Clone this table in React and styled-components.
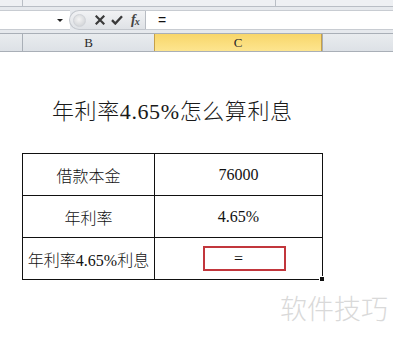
import React from "react";
import styled, { createGlobalStyle } from "styled-components";

const Global = createGlobalStyle`
  html, body {
    margin: 0;
    padding: 0;
    background: #ffffff;
  }
  body {
    font-family: "Liberation Serif", "Noto Sans CJK SC", serif;
  }
`;

const Page = styled.div`
  position: relative;
  width: 393px;
  height: 341px;
  overflow: hidden;
  background: #ffffff;
  display: flex;
  flex-direction: column;
`;

const TopStrip = styled.div`
  height: 6px;
  display: grid;
  grid-template-columns: 22px 253px 1fr;
  background: #eef0f3;
  border-bottom: 1px solid #b9bec5;
  div + div {
    border-left: 1px solid #b9bec5;
  }
`;

const Band = styled.div`
  height: ${(p) => p.h}px;
  background: #e6e9ed;
`;

const FormulaBar = styled.div`
  height: 20px;
  display: flex;
  align-items: stretch;
  background: #e6e9ed;
`;

const NameBox = styled.div`
  width: 70px;
  background: #ffffff;
  border-top: 1px solid #c8ccd2;
  border-bottom: 1px solid #c8ccd2;
  display: flex;
  align-items: center;
  justify-content: flex-end;
  padding-right: 7px;
  box-sizing: border-box;
`;

const Arrow = styled.span`
  width: 0;
  height: 0;
  border-left: 3px solid transparent;
  border-right: 3px solid transparent;
  border-top: 3px solid #222;
`;

const Tools = styled.div`
  width: 77px;
  margin-left: -1px;
  display: flex;
  align-items: center;
  box-sizing: border-box;
  border: 1px solid #c3c7cd;
  border-right: 1px solid #b8bcc3;
  border-radius: 10px 0 0 10px;
  background: linear-gradient(#f1f2f4, #dfe2e6);
`;

const Knob = styled.span`
  width: 11px;
  height: 11px;
  margin-left: 3px;
  border-radius: 50%;
  background: radial-gradient(circle at 45% 40%, #f4f4f4, #c9ccd0);
  border: 1px solid #d0d3d8;
`;

const ToolIcon = styled.svg`
  margin-left: ${(p) => p.ml}px;
`;

const Fx = styled.span`
  margin-left: 8px;
  font-family: "Liberation Serif", serif;
  font-style: italic;
  font-weight: bold;
  font-size: 14px;
  color: #444;
  letter-spacing: -1px;
  sub {
    font-size: 10px;
    vertical-align: -1px;
  }
`;

const FormulaInput = styled.div`
  flex: 1;
  background: #ffffff;
  border-top: 1px solid #c8ccd2;
  border-bottom: 1px solid #c8ccd2;
  display: flex;
  align-items: center;
  padding-left: 12px;
  font-family: "Liberation Sans", sans-serif;
  font-size: 14px;
  color: #111;
`;

const Headers = styled.div`
  height: 17px;
  display: grid;
  grid-template-columns: 22px 132px 168px 1fr;
  background: linear-gradient(#e9ecef, #dde1e6);
  border-top: 1px solid #a9afb7;
  border-bottom: 1px solid #a9afb7;
`;

const ColHead = styled.div`
  display: flex;
  align-items: center;
  justify-content: center;
  font-family: "Liberation Serif", serif;
  font-size: 13px;
  color: #2a2a2a;
  border-left: ${(p) => (p.first ? "none" : "1px solid #a9afb7")};
  background: ${(p) =>
    p.active ? "linear-gradient(#f8d66a, #fde58f)" : "transparent"};
  ${(p) => p.active && "border-left: 1px solid #c5a04a; border-right: 1px solid #c5a04a;"}
`;

const Sheet = styled.div`
  flex: 1;
  display: flex;
  flex-direction: column;
  padding-left: 22px;
`;

const Title = styled.h1`
  margin: 48px 0 0 30px;
  font-weight: 300;
  font-size: 22px;
  line-height: 24px;
  letter-spacing: 0.6px;
  color: #1a1a1a;
  font-family: "Liberation Serif", "Noto Sans CJK SC", serif;
`;

const Table = styled.table`
  margin-top: 29px;
  border-collapse: collapse;
  width: 301px;
  td {
    border: 1px solid #111;
    height: 41px;
    padding: 0;
    text-align: center;
    font-size: 16px;
    font-weight: 300;
    color: #111;
    font-family: "Liberation Serif", "Noto Sans CJK SC", serif;
  }
`;

const LabelCell = styled.td`
  width: 131px;
`;

const ValueCell = styled.td`
  position: relative;
`;

const RedBox = styled.span`
  position: absolute;
  left: 48px;
  top: 8px;
  width: 83px;
  height: 25px;
  box-sizing: border-box;
  border: 2px solid #c2363c;
`;

const Handle = styled.span`
  position: absolute;
  right: -3px;
  bottom: -3px;
  width: 4px;
  height: 4px;
  background: #111;
  border: 1px solid #fff;
`;

const Watermark = styled.div`
  position: absolute;
  left: 280px;
  top: 292px;
  font-family: "Noto Sans CJK SC", sans-serif;
  font-weight: 300;
  font-size: 27px;
  line-height: 32px;
  color: #d9d9d9;
`;

const rows = [
  { label: "借款本金", value: "76000" },
  { label: "年利率", value: "4.65%" },
];

export default function App() {
  return (
    <Page>
      <Global />
      <TopStrip>
        <div />
        <div />
        <div />
      </TopStrip>
      <Band h={3} />
      <FormulaBar>
        <NameBox>
          <Arrow />
        </NameBox>
        <Tools>
          <Knob />
          <ToolIcon ml={9} width="10" height="10" viewBox="0 0 10 10">
            <path d="M1.5 1.5 L8.5 8.5 M8.5 1.5 L1.5 8.5" stroke="#3a3a3a" strokeWidth="2.2" strokeLinecap="square" />
          </ToolIcon>
          <ToolIcon ml={6} width="12" height="10" viewBox="0 0 12 10">
            <path d="M1 5.2 L4.3 8.5 L11 1.3" stroke="#3a3a3a" strokeWidth="2.4" fill="none" />
          </ToolIcon>
          <Fx>
            f<sub>x</sub>
          </Fx>
        </Tools>
        <FormulaInput>=</FormulaInput>
      </FormulaBar>
      <Band h={3} />
      <Headers>
        <ColHead first />
        <ColHead>B</ColHead>
        <ColHead active>C</ColHead>
        <ColHead />
      </Headers>
      <Sheet>
        <Title>年利率4.65%怎么算利息</Title>
        <Table>
          <tbody>
            {rows.map((r) => (
              <tr key={r.label}>
                <LabelCell>{r.label}</LabelCell>
                <td>{r.value}</td>
              </tr>
            ))}
            <tr>
              <LabelCell>年利率4.65%利息</LabelCell>
              <ValueCell>
                =
                <RedBox />
                <Handle />
              </ValueCell>
            </tr>
          </tbody>
        </Table>
      </Sheet>
      <Watermark>软件技巧</Watermark>
    </Page>
  );
}
